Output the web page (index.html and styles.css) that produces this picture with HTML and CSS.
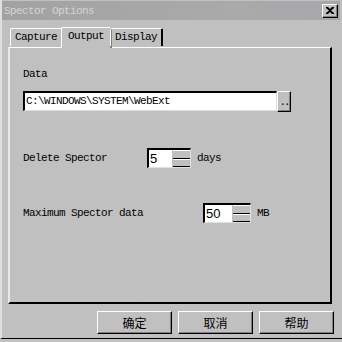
FILE: index.html
```html
<!DOCTYPE html>
<html lang="zh-CN">
<head>
    <meta charset="UTF-8">
    <title>Spector Options</title>
    <link rel="stylesheet" href="styles.css">
</head>
<body>
    <div class="window">
        <div class="titlebar">
            <span class="title">Spector Options</span>
            <span class="close">
                <svg width="8" height="7" viewBox="0 0 8 7">
                    <path d="M0 0h2l2 2 2-2h2v1L5 3.5 8 6v1H6L4 5 2 7H0V6l3-2.5L0 1z" fill="#000"/>
                </svg>
            </span>
        </div>

        <div class="tabs">
            <div class="tab">Capture</div>
            <div class="tab active">Output</div>
            <div class="tab">Display</div>
        </div>

        <div class="panel">
            <div class="label">Data</div>
            <div class="path-row">
                <div class="field path">C:\WINDOWS\SYSTEM\WebExt</div>
                <div class="browse">..</div>
            </div>

            <div class="row delete-row">
                <span class="row-label">Delete Spector</span>
                <div class="spinner small">
                    <span class="value">5</span>
                    <span class="arrows"><i></i><i></i></span>
                </div>
                <span class="unit">days</span>
            </div>

            <div class="row max-row">
                <span class="row-label">Maximum Spector data</span>
                <div class="spinner wide">
                    <span class="value">50</span>
                    <span class="arrows"><i></i><i></i></span>
                </div>
                <span class="unit">MB</span>
            </div>
        </div>

        <div class="buttons">
            <button class="btn">确定</button>
            <button class="btn">取消</button>
            <button class="btn">帮助</button>
        </div>
    </div>
</body>
</html>
```

FILE: styles.css
```css
body {
    margin: 0;
    background: #c0c0c0;
    font-family: "Liberation Mono", "DejaVu Sans Mono", monospace;
    font-size: 11px;
    letter-spacing: -0.6px;
    color: #000;
}
.window {
    width: 342px;
    height: 339px;
    box-sizing: border-box;
    border-left: 2px solid #e0e0e0;
    border-bottom: 1px solid #000;
    padding: 1px 2px 0 0;
    background: #c0c0c0;
    display: flex;
    flex-direction: column;
}
.titlebar {
    height: 19px;
    background: linear-gradient(to right, #a2a2a2, #aaaaaa 70%, #a8a6ab);
    display: flex;
    align-items: center;
    justify-content: space-between;
    padding: 0 2px 0 2px;
}
.title {
    color: #d4d4d4;
}
.close {
    width: 16px;
    height: 14px;
    box-sizing: border-box;
    background: #c0c0c0;
    border-top: 1px solid #fff;
    border-left: 1px solid #fff;
    border-right: 1px solid #000;
    border-bottom: 1px solid #000;
    box-shadow: inset -1px -1px 0 #808080;
    display: flex;
    align-items: center;
    justify-content: center;
}
.tabs {
    display: flex;
    align-items: flex-end;
    height: 20px;
    margin-top: 7px;
    padding-left: 8px;
    position: relative;
    z-index: 1;
}
.tab {
    height: 18px;
    box-sizing: border-box;
    padding: 0 4px;
    line-height: 17px;
    border-top: 1px solid #fff;
    border-left: 1px solid #fff;
    border-right: 2px solid #000;
    border-radius: 2px 2px 0 0;
    margin-bottom: 1px;
}
.tab.active {
    height: 21px;
    margin: 0 -2px -1px -2px;
    padding: 1px 6px 0;
    line-height: 14px;
    background: #c0c0c0;
    border-right-color: #808080;
}
.panel {
    margin: 0 8px 0 6px;
    height: 257px;
    box-sizing: border-box;
    border-top: 1px solid #fff;
    border-left: 2px solid #e8e8e8;
    border-right: 2px solid #000;
    border-bottom: 2px solid #000;
    padding: 20px 0 0 13px;
}
.label {
    line-height: 12px;
}
.path-row {
    display: flex;
    margin-top: 11px;
}
.field {
    background: #fff;
    box-sizing: border-box;
    border-top: 2px solid #000;
    border-left: 2px solid #000;
    border-right: 1px solid #dfdfdf;
    border-bottom: 1px solid #dfdfdf;
    height: 20px;
    line-height: 17px;
    padding-left: 1px;
}
.path {
    width: 254px;
}
.browse {
    width: 14px;
    height: 21px;
    box-sizing: border-box;
    border-top: 1px solid #fff;
    border-left: 1px solid #fff;
    border-right: 1px solid #000;
    border-bottom: 1px solid #000;
    box-shadow: inset -1px -1px 0 #808080;
    text-align: center;
    line-height: 20px;
    letter-spacing: -2px;
}
.row {
    display: flex;
    align-items: center;
    height: 20px;
}
.delete-row {
    margin-top: 36px;
}
.max-row {
    margin-top: 35px;
}
.delete-row .row-label {
    width: 124px;
}
.max-row .row-label {
    width: 180px;
}
.spinner {
    display: flex;
    background: #fff;
    box-sizing: border-box;
    height: 20px;
    border-top: 2px solid #000;
    border-left: 2px solid #000;
    border-right: 1px solid #dfdfdf;
    border-bottom: 1px solid #dfdfdf;
}
.spinner.small {
    width: 44px;
}
.spinner.wide {
    width: 48px;
}
.spinner .value {
    flex: 1;
    font-family: "Liberation Sans", Arial, sans-serif;
    font-size: 13px;
    letter-spacing: 0;
    line-height: 17px;
    padding-left: 1px;
}
.arrows {
    width: 17px;
    display: flex;
    flex-direction: column;
    border-left: 1px solid #c0c0c0;
}
.arrows i {
    flex: 1;
    background: #c0c0c0;
    border-top: 1px solid #fff;
    border-bottom: 1px solid #000;
}
.unit {
    margin-left: 6px;
}
.buttons {
    display: flex;
    justify-content: flex-end;
    gap: 6px;
    margin-top: 7px;
    padding-right: 6px;
}
.btn {
    width: 75px;
    height: 23px;
    background: #c0c0c0;
    border-top: 1px solid #fff;
    border-left: 1px solid #fff;
    border-right: 1px solid #000;
    border-bottom: 1px solid #000;
    box-shadow: inset -1px -1px 0 #808080;
    font-family: "Noto Sans CJK SC", sans-serif;
    font-size: 12px;
    letter-spacing: 0;
    color: #000;
    padding: 0;
}
```
